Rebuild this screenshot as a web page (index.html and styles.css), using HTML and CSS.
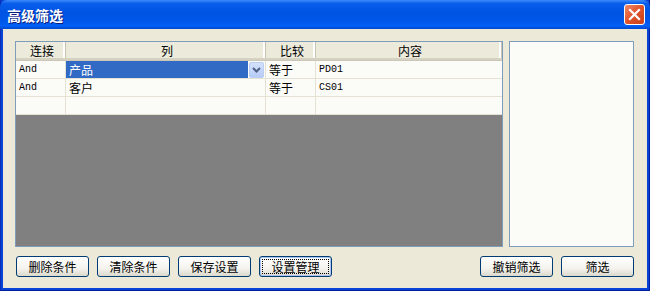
FILE: index.html
```html
<!DOCTYPE html>
<html lang="zh-CN">
<head>
    <meta charset="UTF-8">
    <title>高级筛选</title>
    <link rel="stylesheet" href="styles.css">
</head>
<body>
    <div class="window">
        <div class="titlebar">
            <span class="title">高级筛选</span>
            <span class="close">
                <svg width="13" height="13" viewBox="0 0 13 13">
                    <path d="M2 2 L11 11 M11 2 L2 11" stroke="#fff" stroke-width="2.2" stroke-linecap="square"/>
                </svg>
            </span>
        </div>
        <div class="content">
            <div class="top">
                <div class="grid">
                    <div class="row head">
                        <div class="cell c1">连接</div>
                        <div class="cell c2">列</div>
                        <div class="cell c3">比较</div>
                        <div class="cell c4">内容</div>
                    </div>
                    <div class="row">
                        <div class="cell c1 mono">And</div>
                        <div class="cell c2 selected">
                            <span class="sel-text">产品</span>
                            <span class="drop">
                                <svg width="9" height="6" viewBox="0 0 9 6">
                                    <path d="M1 1 L4.5 4.5 L8 1" stroke="#4D6185" stroke-width="2" fill="none"/>
                                </svg>
                            </span>
                        </div>
                        <div class="cell c3">等于</div>
                        <div class="cell c4 mono">PD01</div>
                    </div>
                    <div class="row">
                        <div class="cell c1 mono">And</div>
                        <div class="cell c2">客户</div>
                        <div class="cell c3">等于</div>
                        <div class="cell c4 mono">CS01</div>
                    </div>
                    <div class="row">
                        <div class="cell c1"></div>
                        <div class="cell c2"></div>
                        <div class="cell c3"></div>
                        <div class="cell c4"></div>
                    </div>
                    <div class="empty"></div>
                </div>
                <div class="side"></div>
            </div>
            <div class="buttons">
                <button class="btn">删除条件</button>
                <button class="btn">清除条件</button>
                <button class="btn">保存设置</button>
                <button class="btn focus">设置管理</button>
                <span class="spacer"></span>
                <button class="btn">撤销筛选</button>
                <button class="btn">筛选</button>
            </div>
        </div>
    </div>
</body>
</html>
```

FILE: styles.css
```css
body {
    margin: 0;
    padding: 0;
    font-family: "Noto Sans CJK SC", "Liberation Sans", sans-serif;
    font-size: 12px;
}
.window {
    width: 650px;
    height: 291px;
    box-sizing: border-box;
    display: flex;
    flex-direction: column;
    background: #0843D6;
    padding: 0 2px 2px 2px;
    border-left: 1px solid #0A2DB5;
    border-right: 1px solid #001EA0;
    border-bottom: 1px solid #001EA0;
}
.titlebar {
    height: 29px;
    margin: 0 -3px;
    padding: 0 5px 0 7px;
    display: flex;
    align-items: center;
    justify-content: space-between;
    border-radius: 7px 7px 0 0;
    background: linear-gradient(#3D8BF7 0%, #0A5EEC 12%, #0054E3 40%, #0057EA 75%, #0160F8 88%, #0049CE 100%);
}
.title {
    color: #fff;
    font-weight: bold;
    font-size: 14px;
    text-shadow: 1px 1px 0 #0A1E80;
}
.close {
    width: 19px;
    height: 19px;
    border: 1px solid #fff;
    border-radius: 3px;
    background: linear-gradient(135deg, #F08A68, #E0532A 50%, #C8401A);
    display: flex;
    align-items: center;
    justify-content: center;
}
.content {
    flex: 1;
    background: #ECE9D8;
    padding: 12px 13px 0 12px;
    display: flex;
    flex-direction: column;
}
.top {
    display: flex;
    gap: 6px;
    height: 206px;
}
.grid {
    width: 488px;
    box-sizing: border-box;
    border: 1px solid #7F9DB9;
    display: flex;
    flex-direction: column;
    background: #808080;
}
.row {
    display: flex;
    height: 18px;
    background: #FBFBF8;
}
.row.head {
    height: 16px;
    background: #EBEADB;
    border-bottom: 2px solid #D6D2C2;
    box-shadow: 0 1px 0 #CBC7B8;
    margin-bottom: 1px;
}
.head .cell {
    justify-content: center;
    border-bottom: none;
    border-right: 1px solid #C7C5B2;
    box-shadow: inset -2px 0 0 #fff;
}
.cell {
    box-sizing: border-box;
    display: flex;
    align-items: center;
    padding-left: 3px;
    border-right: 1px solid #E5E2D3;
    border-bottom: 1px solid #E5E2D3;
    color: #000;
    overflow: hidden;
    white-space: nowrap;
}
.c1 { width: 50px; }
.c2 { width: 200px; }
.c3 { width: 50px; }
.c4 { flex: 1; border-right: none; }
.head .c4 { border-right: 1px solid #C7C5B2; }
.mono {
    font-family: "Liberation Mono", monospace;
    font-size: 10px;
    padding-left: 3px;
}
.selected {
    padding: 0;
    background: #FBFBF8;
}
.sel-text {
    flex: 1;
    height: 100%;
    background: #316AC5;
    color: #fff;
    padding-left: 3px;
    display: flex;
    align-items: center;
}
.drop {
    width: 15px;
    height: 16px;
    margin: 0 1px;
    box-sizing: border-box;
    border: 1px solid #B9CDF5;
    border-radius: 2px;
    background: linear-gradient(#D4E1FC, #B6CBF7);
    display: flex;
    align-items: center;
    justify-content: center;
}
.empty {
    flex: 1;
    background: #808080;
}
.side {
    flex: 1;
    border: 1px solid #7F9DB9;
    background: #FBFBF8;
}
.buttons {
    display: flex;
    gap: 8px;
    margin-top: 9px;
    padding-left: 1px;
}
.spacer {
    flex: 1;
}
.btn {
    width: 73px;
    height: 21px;
    padding: 0;
    border: 1px solid #003C74;
    border-radius: 3px;
    background: linear-gradient(#FFFFFF, #F4F3EE 60%, #DCD8CB);
    font-family: "Noto Sans CJK SC", sans-serif;
    font-size: 12px;
    color: #000;
    line-height: 17px;
}
.btn.focus {
    outline: 1px dotted #000;
    outline-offset: -4px;
    box-shadow: inset 0 0 0 1px #A9C4F2;
}
```
